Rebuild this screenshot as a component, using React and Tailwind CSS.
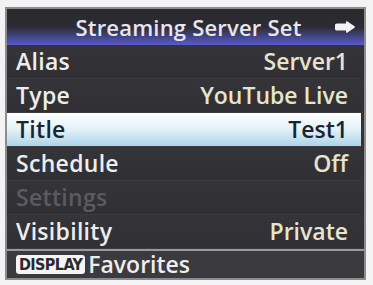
import { useState } from "react";

const rows = [
  { label: "Alias", value: "Server1" },
  { label: "Type", value: "YouTube Live" },
  { label: "Title", value: "Test1", selected: true },
  { label: "Schedule", value: "Off" },
  { label: "Settings", value: "", disabled: true },
  { label: "Visibility", value: "Private" },
];

function NextIcon() {
  return (
    <svg width="24" height="14" viewBox="0 0 24 14">
      <path
        d="M2 5 Q2 3.5 4 3.5 L13 3.5 L13 1.5 Q13.5 1 14.5 1.5 L21.5 6.2 Q22.5 7 21.5 7.8 L14.5 12.5 Q13.5 13 13 12.5 L13 10.5 L4 10.5 Q2 10.5 2 9 Z"
        fill="#f2f2f2"
      />
    </svg>
  );
}

export default function App() {
  const [selected] = useState(2);

  return (
    <div
      className="w-[373px] h-[285px] bg-[#f3f3f3] pt-[7px] pl-[5px] pr-[7px] pb-[5px]"
      style={{ fontFamily: '"Open Sans", "DejaVu Sans", sans-serif' }}
    >
      <div className="h-full flex flex-col border-2 border-[#8c8c8e] bg-[#333235] overflow-hidden">
        {/* header */}
        <div className="h-[36px] shrink-0 flex items-center justify-center relative bg-gradient-to-b from-[#29292c] via-[#2c2b35] to-[#5a5ad0] pl-[6px]">
          <span className="text-[22px] font-semibold text-[#e6e6ec] leading-none tracking-[0.2px]">
            Streaming Server Set
          </span>
          <div className="absolute right-[7px] top-[11px]">
            <NextIcon />
          </div>
        </div>

        {/* rows */}
        {rows.map((row, i) => (
          <div
            key={row.label}
            className={`h-[34px] shrink-0 flex items-center justify-between pl-[9px] pr-[13px] mr-[3px] border-b border-[#3d3c40] ${
              i === selected
                ? "bg-gradient-to-b from-[#ffffff] via-[#e2f1f8] to-[#acd4ea] text-[#1b2530]"
                : "bg-gradient-to-b from-[#353438] to-[#302f33]"
            }`}
          >
            <span
              className={`text-[23px] font-semibold leading-none tracking-[0.3px] ${
                row.disabled
                  ? "text-[#5c5b61]"
                  : i === selected
                  ? "text-[#1b2530] font-bold"
                  : "text-[#ededed]"
              }`}
            >
              {row.label}
            </span>
            <span
              className={`text-[23px] font-semibold leading-none ${
                i === selected ? "text-[#1b2530] font-bold" : "text-[#e6e4cc]"
              }`}
            >
              {row.value}
            </span>
          </div>
        ))}

        <div className="h-[2px] shrink-0 bg-[#9a9a9c]" />

        {/* footer */}
        <div className="flex-1 flex items-center gap-[3px] pl-[9px] bg-[#3b3a3f]">
          <span
            className="bg-[#f4f4f4] text-[#2a2a2e] rounded-[3px] px-[3px] h-[19px] flex items-center text-[16px] font-bold leading-none tracking-[-0.6px]"
            style={{ fontFamily: '"DejaVu Sans Condensed", "Liberation Sans Narrow", sans-serif' }}
          >
            DISPLAY
          </span>
          <span className="text-[23px] font-semibold text-[#ededed] leading-none">
            Favorites
          </span>
        </div>
      </div>
    </div>
  );
}
